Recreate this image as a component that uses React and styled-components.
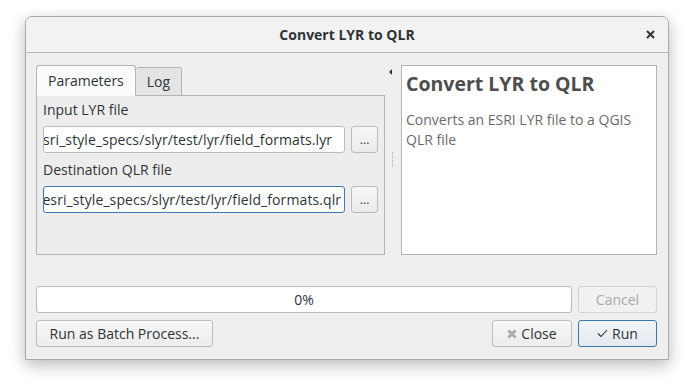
import React from "react";
import styled, { createGlobalStyle } from "styled-components";

const Global = createGlobalStyle`
  html, body { margin: 0; padding: 0; background: #ffffff; }
  body { font-family: "Open Sans", "Noto Sans", sans-serif; font-size: 13px; color: #2e3436; }
  * { box-sizing: border-box; }
`;

const Page = styled.div`
  padding: 16px 0 0 25px;
  width: 696px;
  height: 384px;
`;

const Window = styled.div`
  width: 644px;
  height: 344px;
  border: 1px solid #a9a9a9;
  border-radius: 7px 7px 0 0;
  background: #efefef;
  box-shadow: 0 5px 16px rgba(0, 0, 0, 0.28);
  display: flex;
  flex-direction: column;
`;

const TitleBar = styled.div`
  height: 36px;
  flex: none;
  border-bottom: 1px solid #b8b8b8;
  background: #f2f2f2;
  border-radius: 6px 6px 0 0;
  display: grid;
  grid-template-columns: 40px 1fr 40px;
  align-items: center;
`;

const Title = styled.div`
  grid-column: 2;
  text-align: center;
  font-weight: 700;
  font-size: 14px;
  color: #2e3436;
`;

const CloseX = styled.div`
  grid-column: 3;
  display: flex;
  justify-content: center;
  padding-left: 4px;
`;

const Body = styled.div`
  flex: 1;
  padding: 12px 11px 12px 10px;
  display: flex;
  flex-direction: column;
`;

const MainRow = styled.div`
  display: flex;
  height: 190px;
`;

const TabWidget = styled.div`
  width: 349px;
  display: flex;
  flex-direction: column;
`;

const TabBar = styled.div`
  display: flex;
  align-items: flex-end;
  height: 31px;
  margin-bottom: -1px;
  position: relative;
  z-index: 1;
`;

const Tab = styled.div`
  height: ${(p) => (p.$active ? "31px" : "29px")};
  padding: 0 11px 1px;
  display: flex;
  align-items: center;
  border: 1px solid #b4b4b4;
  border-bottom: ${(p) => (p.$active ? "1px solid #fbfbfb" : "1px solid #b4b4b4")};
  border-left: ${(p) => (p.$active ? "1px solid #b4b4b4" : "none")};
  border-radius: 3px 3px 0 0;
  background: ${(p) => (p.$active ? "#fbfbfb" : "#e4e4e4")};
  color: #2e3436;
  font-size: 14px;
`;

const Pane = styled.div`
  flex: 1;
  border: 1px solid #b4b4b4;
  background: #ededed;
  padding: 0 6px;
  display: flex;
  flex-direction: column;
`;

const FieldLabel = styled.div`
  height: 30px;
  padding-bottom: 3px;
  display: flex;
  align-items: center;
  font-size: 14px;
  color: #2e3436;
`;

const FieldRow = styled.div`
  display: flex;
  gap: 6px;
  margin-bottom: 3px;
`;

const TextBox = styled.div`
  width: 304px;
  height: 27px;
  background: #ffffff;
  border: 1px solid ${(p) => (p.$focus ? "#3d7ab5" : "#bcbcbc")};
  border-radius: 3px;
  display: flex;
  align-items: center;
  justify-content: flex-end;
  overflow: hidden;
  white-space: nowrap;
  padding-right: ${(p) => (p.$focus ? "2px" : "12px")};
  font-size: 14px;
  letter-spacing: 0.1px;
  color: #2e3436;
`;

const Caret = styled.span`
  display: inline-block;
  width: 1px;
  height: 17px;
  background: #000;
  margin-left: 1px;
  vertical-align: middle;
`;

const SmallButton = styled.div`
  width: 27px;
  height: 27px;
  border: 1px solid #bcbcbc;
  border-radius: 3px;
  background: linear-gradient(#f6f6f6, #ebebeb);
  display: flex;
  align-items: flex-end;
  justify-content: center;
  padding-bottom: 6px;
  font-size: 12px;
  line-height: 1;
  color: #2e3436;
`;

const Splitter = styled.div`
  width: 16px;
  position: relative;
`;

const SplitArrow = styled.div`
  position: absolute;
  left: 4px;
  top: 4px;
  width: 0;
  height: 0;
  border-top: 3px solid transparent;
  border-bottom: 3px solid transparent;
  border-right: 3px solid #3a3a3a;
`;

const SplitDots = styled.div`
  position: absolute;
  left: 7px;
  top: 87px;
  width: 1px;
  height: 16px;
  background-image: linear-gradient(#b0b0b0 50%, transparent 50%);
  background-size: 1px 2px;
`;

const HelpPanel = styled.div`
  flex: 1;
  background: #ffffff;
  border: 1px solid #b4b4b4;
  padding: 4px 4px;
`;

const HelpTitle = styled.div`
  font-size: 19.5px;
  font-weight: 700;
  color: #4d4d4d;
  line-height: 28px;
`;

const HelpText = styled.div`
  margin-top: 12px;
  font-size: 14px;
  line-height: 20px;
  color: #6a6a6a;
`;

const ProgressRow = styled.div`
  margin-top: 31px;
  display: flex;
  gap: 6px;
  height: 27px;
`;

const Progress = styled.div`
  flex: 1;
  background: #ffffff;
  border: 1px solid #bcbcbc;
  border-radius: 3px;
  display: flex;
  align-items: center;
  justify-content: center;
  font-size: 14px;
  color: #2e3436;
`;

const Button = styled.div`
  width: ${(p) => p.$w}px;
  height: 27px;
  border: 1px solid ${(p) => (p.$primary ? "#3c78ae" : p.$disabled ? "#d3d3d3" : "#bcbcbc")};
  border-radius: 3px;
  background: ${(p) =>
    p.$primary
      ? "linear-gradient(#f2f5f8, #e3e9ef)"
      : p.$disabled
      ? "#f1f1f1"
      : "linear-gradient(#f7f7f7, #ececec)"};
  color: ${(p) => (p.$disabled ? "#a9a9a9" : "#2e3436")};
  display: flex;
  align-items: center;
  justify-content: center;
  gap: 4px;
  font-size: 14px;
`;

const ButtonRow = styled.div`
  margin-top: 7px;
  display: flex;
  gap: 6px;
`;

const Spacer = styled.div`
  flex: 1;
`;

export default function App() {
  return (
    <>
      <Global />
      <Page>
        <Window>
          <TitleBar>
            <Title>Convert LYR to QLR</Title>
            <CloseX>
              <svg width="9" height="9" viewBox="0 0 9 9">
                <path d="M1 1 L8 8 M8 1 L1 8" stroke="#2e3436" strokeWidth="2" />
              </svg>
            </CloseX>
          </TitleBar>
          <Body>
            <MainRow>
              <TabWidget>
                <TabBar>
                  <Tab $active>Parameters</Tab>
                  <Tab>Log</Tab>
                </TabBar>
                <Pane>
                  <FieldLabel>Input LYR file</FieldLabel>
                  <FieldRow>
                    <TextBox>/home/nyall/dev/esri_style_specs/slyr/test/lyr/field_formats.lyr</TextBox>
                    <SmallButton>...</SmallButton>
                  </FieldRow>
                  <FieldLabel>Destination QLR file</FieldLabel>
                  <FieldRow>
                    <TextBox $focus>
                      /home/nyall/dev/esri_style_specs/slyr/test/lyr/field_formats.qlr
                      <Caret />
                    </TextBox>
                    <SmallButton>...</SmallButton>
                  </FieldRow>
                </Pane>
              </TabWidget>
              <Splitter>
                <SplitArrow />
                <SplitDots />
              </Splitter>
              <HelpPanel>
                <HelpTitle>Convert LYR to QLR</HelpTitle>
                <HelpText>Converts an ESRI LYR file to a QGIS QLR file</HelpText>
              </HelpPanel>
            </MainRow>
            <ProgressRow>
              <Progress>0%</Progress>
              <Button $w={79} $disabled>Cancel</Button>
            </ProgressRow>
            <ButtonRow>
              <Button $w={177}>Run as Batch Process...</Button>
              <Spacer />
              <Button $w={80}>
                <svg width="10" height="10" viewBox="0 0 10 10">
                  <path d="M1.5 1.5 L8.5 8.5 M8.5 1.5 L1.5 8.5" stroke="#8a8a8a" strokeWidth="2.4" />
                  <path d="M1.5 1.5 L8.5 8.5 M8.5 1.5 L1.5 8.5" stroke="#d8d8d8" strokeWidth="0.8" />
                </svg>
                Close
              </Button>
              <Button $w={79} $primary>
                <svg width="11" height="9" viewBox="0 0 11 9">
                  <path d="M1 4.5 L4 7.5 L10 1" stroke="#2e3436" strokeWidth="1.1" fill="none" />
                </svg>
                Run
              </Button>
            </ButtonRow>
          </Body>
        </Window>
      </Page>
    </>
  );
}
